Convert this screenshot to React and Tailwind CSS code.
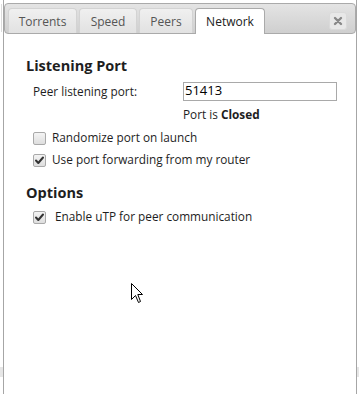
import React from "react";

const font = { fontFamily: '"Open Sans", "DejaVu Sans", sans-serif' };

function Check({ checked }) {
  return (
    <span className="relative inline-flex h-[13px] w-[13px] shrink-0 items-center justify-center rounded-[2px] border border-[#a9a9a9] bg-gradient-to-b from-[#f4f4f4] to-[#dedede]">
      {checked && (
        <svg width="11" height="11" viewBox="0 0 11 11" className="absolute left-[0px] top-[0px]">
          <path d="M2 5.5 L4.3 8 L9 2.5" fill="none" stroke="#333" strokeWidth="2" strokeLinecap="round" strokeLinejoin="round" />
        </svg>
      )}
    </span>
  );
}

export default function App() {
  return (
    <div className="relative h-[394px] w-[359px] overflow-hidden bg-white text-[#1e1e1e]" style={font}>
      <div className="absolute left-0 top-[367px] h-[10px] w-[3px] bg-[#e6e6e6]" />
      <div className="absolute right-0 top-[367px] h-[10px] w-[2px] bg-[#e6e6e6]" />
      <div className="absolute left-[1px] top-[4px] h-[28px] w-px bg-[#dcdcdc]" />

      <div className="ml-[3px] flex h-full w-[354px] flex-col border-x border-[#a6a6a6] bg-white">
        <div className="mt-[3px] flex h-[31px] shrink-0 items-start rounded-[4px] border border-[#aaa] bg-gradient-to-b from-[#e4e4e4] to-[#cfcfcf] pl-[3px]">
          <div className="mt-[4px] flex gap-[2px]">
            <div className="flex h-[25px] w-[69px] items-center justify-center rounded-t-[4px] border border-b-0 border-[#d3d3d3] bg-gradient-to-b from-[#f0f0f0] to-[#e2e2e2] pt-[1px] text-[12px] text-[#555]">Torrents</div>
            <div className="flex h-[25px] w-[58px] items-center justify-center rounded-t-[4px] border border-b-0 border-[#d3d3d3] bg-gradient-to-b from-[#f0f0f0] to-[#e2e2e2] pt-[1px] text-[12px] text-[#555]">Speed</div>
            <div className="flex h-[25px] w-[54px] items-center justify-center rounded-t-[4px] border border-b-0 border-[#d3d3d3] bg-gradient-to-b from-[#f0f0f0] to-[#e2e2e2] pt-[1px] text-[12px] text-[#555]">Peers</div>
            <div className="relative flex h-[26px] w-[70px] items-center justify-center rounded-t-[4px] border border-b-0 border-[#aaa] bg-white text-[12px] text-[#212121]">Network</div>
          </div>
          <div className="ml-auto mr-[8px] mt-[8px] flex h-[18px] w-[18px] items-center justify-center rounded-[3px] border border-[#dadada] bg-[#e8e8e8]">
            <svg width="10" height="10" viewBox="0 0 10 10">
              <path d="M2 2 L8 8 M8 2 L2 8" stroke="#888" strokeWidth="2.4" strokeLinecap="round" />
            </svg>
          </div>
        </div>

        <div className="flex flex-col pl-[22px] pt-[22px]">
          <div className="h-[20px] text-[14.5px] font-bold leading-[20px]">Listening Port</div>
          <div className="mt-[5px] flex h-[20px] items-center pl-[7px]">
            <span className="w-[150px] text-[11.8px] leading-[20px]">Peer listening port:</span>
            <div className="flex h-[19px] w-[154px] items-center border border-[#a9a9a9] pl-[1px] text-[13px] text-black">51413</div>
          </div>
          <div className="mt-[5px] h-[16px] pl-[157px] text-[11.8px] leading-[16px]">
            Port is <span className="font-bold">Closed</span>
          </div>
          <div className="mt-[7px] flex h-[18px] items-center gap-[6px] pl-[7px] text-[11.8px]">
            <Check checked={false} />
            <span>Randomize port on launch</span>
          </div>
          <div className="mt-[4px] flex h-[18px] items-center gap-[6px] pl-[7px] text-[11.8px]">
            <Check checked />
            <span>Use port forwarding from my router</span>
          </div>
          <div className="mt-[14px] h-[20px] text-[14.5px] font-bold leading-[20px]">Options</div>
          <div className="mt-[5px] flex h-[18px] items-center gap-[9px] pl-[7px] text-[11.8px]">
            <Check checked />
            <span>Enable uTP for peer communication</span>
          </div>
        </div>
      </div>

      <svg className="absolute left-[131px] top-[283px]" width="13" height="21" viewBox="0 0 13 21">
        <path d="M0.5 0.5 L0.5 16.5 L4.5 12.5 L7.5 19.5 L9.5 18.5 L6.8 11.5 L11.5 11.5 Z" fill="#fff" stroke="#000" strokeWidth="1" strokeLinejoin="miter" />
      </svg>
    </div>
  );
}
